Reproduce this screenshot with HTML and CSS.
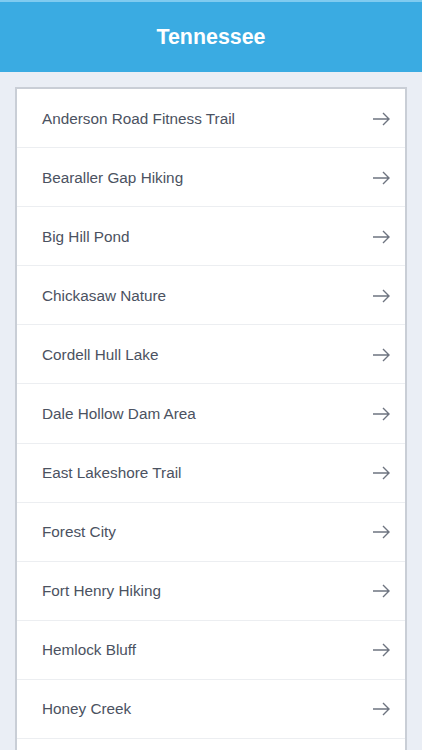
FILE: index.html
```html
<!DOCTYPE html>
<html lang="en">
<head>
  <meta charset="UTF-8" />
  <title>Tennessee</title>
  <link rel="stylesheet" href="styles.css">
</head>
<body>
  <div class="header">
    <h1>Tennessee</h1>
  </div>

  <div class="content">
    <ul class="list">
      <li><span>Anderson Road Fitness Trail</span><svg class="arrow" viewBox="0 0 18 14"><path d="M1 7H17M11 1L17 7L11 13"/></svg></li>
      <li><span>Bearaller Gap Hiking</span><svg class="arrow" viewBox="0 0 18 14"><path d="M1 7H17M11 1L17 7L11 13"/></svg></li>
      <li><span>Big Hill Pond</span><svg class="arrow" viewBox="0 0 18 14"><path d="M1 7H17M11 1L17 7L11 13"/></svg></li>
      <li><span>Chickasaw Nature</span><svg class="arrow" viewBox="0 0 18 14"><path d="M1 7H17M11 1L17 7L11 13"/></svg></li>
      <li><span>Cordell Hull Lake</span><svg class="arrow" viewBox="0 0 18 14"><path d="M1 7H17M11 1L17 7L11 13"/></svg></li>
      <li><span>Dale Hollow Dam Area</span><svg class="arrow" viewBox="0 0 18 14"><path d="M1 7H17M11 1L17 7L11 13"/></svg></li>
      <li><span>East Lakeshore Trail</span><svg class="arrow" viewBox="0 0 18 14"><path d="M1 7H17M11 1L17 7L11 13"/></svg></li>
      <li><span>Forest City</span><svg class="arrow" viewBox="0 0 18 14"><path d="M1 7H17M11 1L17 7L11 13"/></svg></li>
      <li><span>Fort Henry Hiking</span><svg class="arrow" viewBox="0 0 18 14"><path d="M1 7H17M11 1L17 7L11 13"/></svg></li>
      <li><span>Hemlock Bluff</span><svg class="arrow" viewBox="0 0 18 14"><path d="M1 7H17M11 1L17 7L11 13"/></svg></li>
      <li><span>Honey Creek</span><svg class="arrow" viewBox="0 0 18 14"><path d="M1 7H17M11 1L17 7L11 13"/></svg></li>
      <li></li>
    </ul>
  </div>
</body>
</html>
```

FILE: styles.css
```css
body {
  font-family: 'Liberation Sans', Arial, sans-serif;
  background: #eaeef5;
  margin: 0;
  height: 750px;
  overflow: hidden;
}

.header {
  background: #3aabe2;
  border-top: 2px solid #7fcbf0;
  height: 70px;
  display: flex;
  align-items: center;
  justify-content: center;
}

.header h1 {
  margin: 0;
  color: #fff;
  font-size: 21.4px;
  font-weight: bold;
}

.content {
  padding: 15px 15px 0 15px;
}

.list {
  list-style: none;
  margin: 0;
  padding: 0;
  background: #fff;
  border: 2px solid #c9ced6;
  border-bottom: none;
}

.list li {
  height: 57.1px;
  padding: 1px 15px 0 25px;
  border-bottom: 1px solid #eceef1;
  display: flex;
  align-items: center;
  justify-content: space-between;
  color: #4b5261;
  font-size: 15.3px;
}

.arrow {
  width: 18px;
  height: 14px;
  fill: none;
  stroke: #6e7480;
  stroke-width: 1.4;
}
```
